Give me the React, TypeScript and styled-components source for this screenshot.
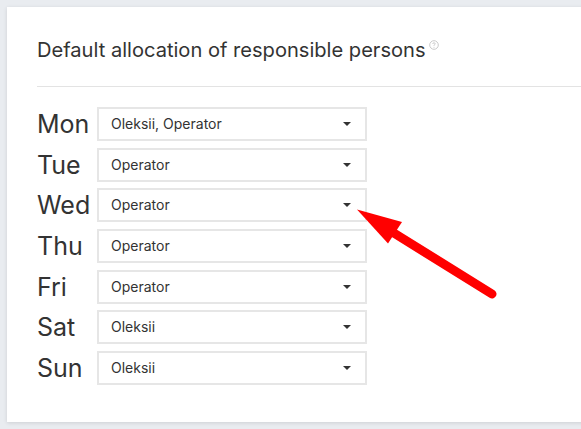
import React from "react";
import styled, { createGlobalStyle } from "styled-components";

const Global = createGlobalStyle`
  html, body { margin: 0; padding: 0; }
  body {
    background: #e9ecf0;
    font-family: Inter, "Noto Sans", sans-serif;
    color: #333;
    overflow: hidden;
  }
`;

const Page = styled.div`
  position: relative;
  width: 581px;
  height: 429px;
  padding: 7px 0 0 7px;
  box-sizing: border-box;
  overflow: hidden;
`;

const Card = styled.div`
  width: 620px;
  height: 415px;
  background: #fff;
  box-shadow: 0 1px 4px rgba(0, 0, 0, 0.12);
  box-sizing: border-box;
  padding-top: 31px;
`;

const Header = styled.div`
  margin-left: 30px;
  padding-bottom: 24px;
  border-bottom: 1px solid #e3e3e3;
`;

const Title = styled.h2`
  margin: 0;
  font-weight: 400;
  font-size: 20.1px;
  line-height: 24px;
  color: #333;
  display: flex;
  align-items: flex-start;
`;

const Help = styled.span`
  display: inline-flex;
  margin-left: 3px;
  margin-top: 2px;
`;

const Rows = styled.div`
  display: flex;
  flex-direction: column;
  gap: 6.7px;
  padding: 20px 0 0 30px;
`;

const Row = styled.div`
  display: flex;
  align-items: center;
  height: 34px;
`;

const Day = styled.div`
  width: 60px;
  font-size: 25px;
  line-height: 34px;
  color: #333;
`;

const Select = styled.div`
  width: 270px;
  height: 34px;
  box-sizing: border-box;
  border: 2px solid #e6e6e6;
  display: flex;
  align-items: center;
  justify-content: space-between;
  padding: 0 14px 0 12px;
`;

const Value = styled.span`
  font-size: 14px;
  line-height: 30px;
  color: #333;
`;

const Caret = styled.span`
  width: 0;
  height: 0;
  border-left: 4px solid transparent;
  border-right: 4px solid transparent;
  border-top: 4px solid #333;
`;

const Arrow = styled.svg`
  position: absolute;
  left: 0;
  top: 0;
  pointer-events: none;
`;

const days: [string, string][] = [
  ["Mon", "Oleksii, Operator"],
  ["Tue", "Operator"],
  ["Wed", "Operator"],
  ["Thu", "Operator"],
  ["Fri", "Operator"],
  ["Sat", "Oleksii"],
  ["Sun", "Oleksii"],
];

export default function App() {
  return (
    <>
      <Global />
      <Page>
        <Card>
          <Header>
            <Title>
              Default allocation of responsible persons
              <Help>
                <svg width="10" height="10" viewBox="0 0 10 10">
                  <circle cx="5" cy="5" r="4.3" fill="none" stroke="#c4c4c4" strokeWidth="0.9" />
                  <path d="M3.7 3.9 Q3.8 2.8 5 2.8 Q6.2 2.8 6.2 3.8 Q6.2 4.5 5.3 4.9 Q5 5.1 5 5.8" fill="none" stroke="#c4c4c4" strokeWidth="0.9" />
                  <circle cx="5" cy="7.2" r="0.5" fill="#c4c4c4" />
                </svg>
              </Help>
            </Title>
          </Header>
          <Rows>
            {days.map(([d, v]) => (
              <Row key={d}>
                <Day>{d}</Day>
                <Select>
                  <Value>{v}</Value>
                  <Caret />
                </Select>
              </Row>
            ))}
          </Rows>
        </Card>
        <Arrow width="581" height="429" viewBox="0 0 581 429">
          <line x1="389" y1="230" x2="492" y2="294" stroke="#ff0000" strokeWidth="9" strokeLinecap="round" />
          <polygon points="357,209.5 402,222 388,243.5" fill="#ff0000" />
        </Arrow>
      </Page>
    </>
  );
}
